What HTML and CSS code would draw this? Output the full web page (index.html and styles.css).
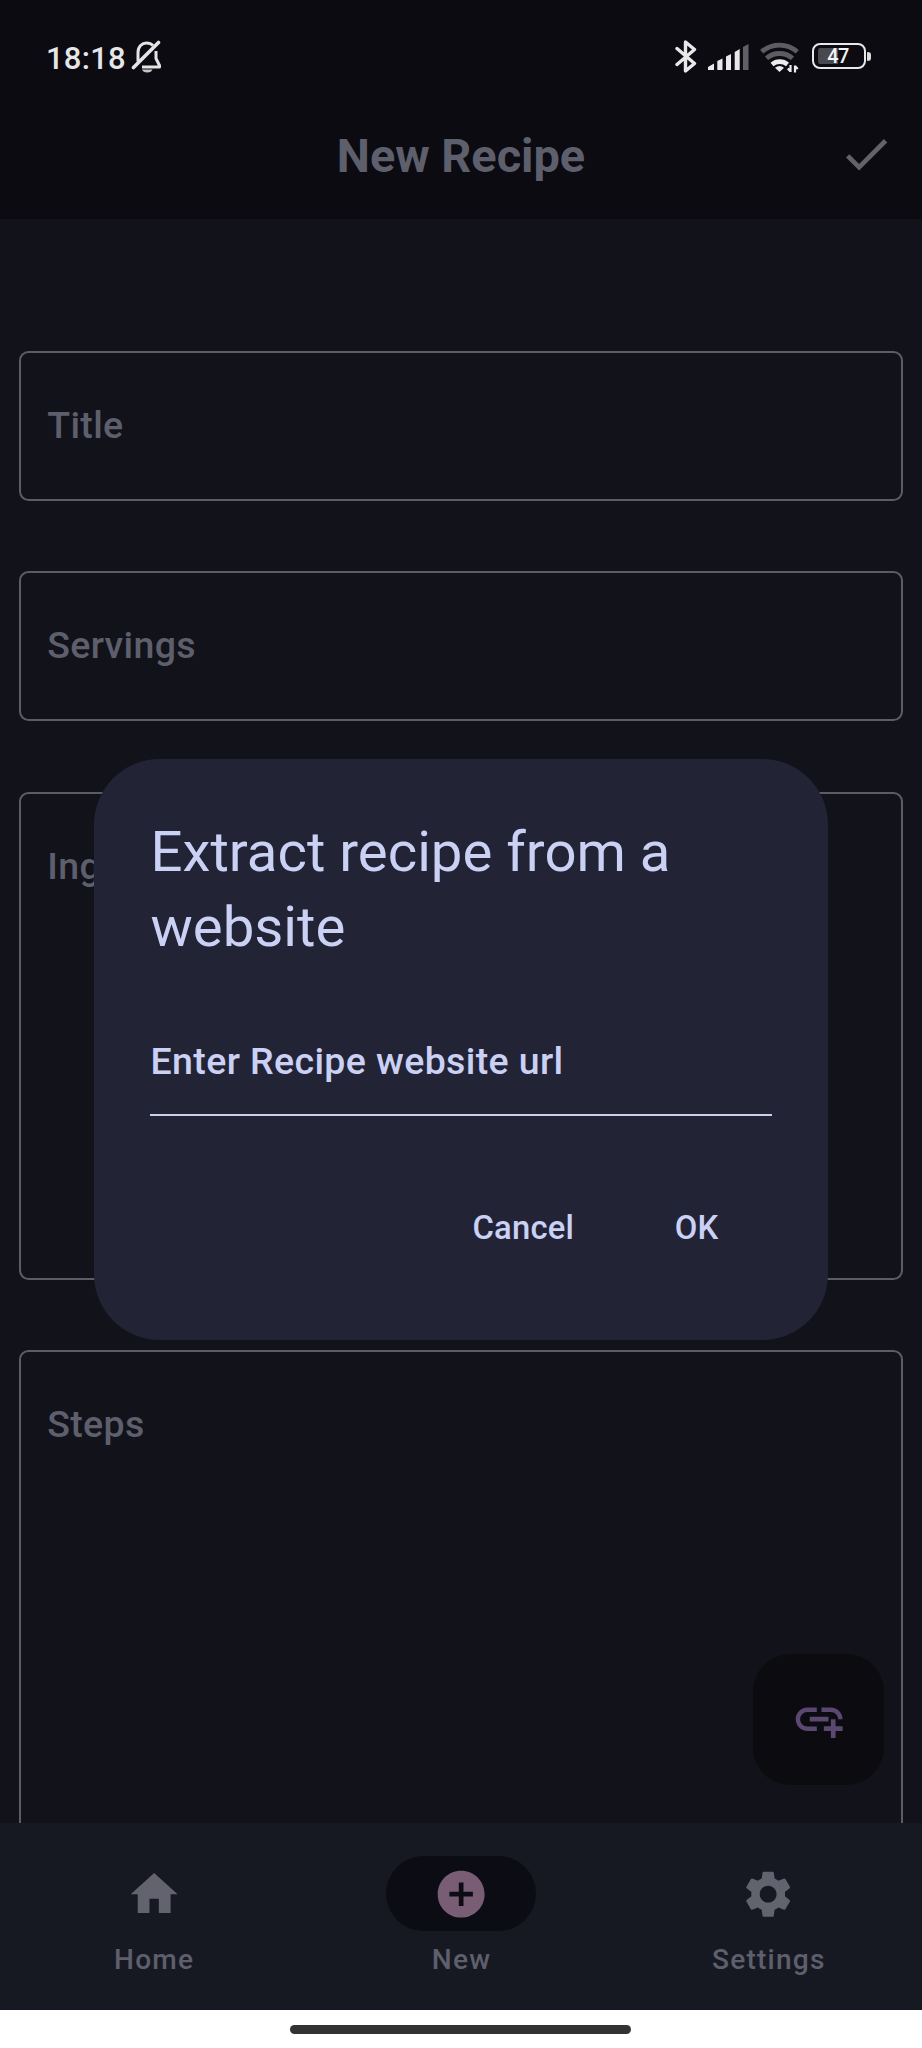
FILE: index.html
```html
<!DOCTYPE html>
<html lang="en">
<head>
<meta charset="utf-8">
<title>New Recipe</title>
<link rel="stylesheet" href="styles.css">
</head>
<body>
<div class="screen">
  <div class="status-bar">
    <span class="clock">18:18</span>
    <svg class="bell" viewBox="0 0 32 34" fill="none" stroke="#e4e4e6" stroke-width="3">
      <path d="M7 21.500V12.500C7 6.500 11 3 15.500 3C18 3 20.500 4 22 5.500M25 11V18.500L28.500 25.500V27H11" stroke-linejoin="round"/>
      <path d="M2.500 27.500L27.500 2.500" stroke-width="3.600" stroke-linecap="round"/>
      <path d="M11 29.500h10.500a5.400 4 0 0 1-10.500 0z" fill="#c4c4c6" stroke="none"/>
    </svg>
    <div class="status-icons">
      <svg class="bluetooth" viewBox="0 0 22 33" fill="none" stroke="#e8e8ea" stroke-width="3.400" stroke-linejoin="round" stroke-linecap="round">
        <path d="M2 8.500L19.500 23.500L10.500 31V2L19.500 9.500L2 24.500"/>
      </svg>
      <svg class="signal" viewBox="0 0 42 27" fill="#e8e8ea">
        <path d="M0 26V23L6 19.500V26zM9.300 26V17L14.500 14.500V26zM18 26V12.500L23 10V26zM26.700 26V8L31.700 5V26z"/>
        <path d="M35 26V3L40.500 0V26z" fill="#606066"/>
      </svg>
      <svg class="wifi" viewBox="0 0 40 31" fill="none">
        <path d="M1.700 9.800a27 27 0 0 1 35.600 0" stroke="#5c5c62" stroke-width="4.800"/>
        <path d="M6.500 16.300a20 20 0 0 1 26 0" stroke="#5c5c62" stroke-width="4.800"/>
        <path d="M12 22.500a12 12 0 0 1 15.500 0" stroke="#ececee" stroke-width="4.600"/>
        <path d="M15 25.700q4.500-3.300 9 0L19.500 30z" fill="#ececee"/>
        <path d="M30.500 23v7M27.800 26.500l2.700 3M35 30.500v-7M37.700 27l-2.700-3" stroke="#ececee" stroke-width="2.200"/>
      </svg>
      <div class="battery"><div class="cell"><span class="level">47</span></div><i class="nub"></i></div>
    </div>
  </div>

  <header class="app-bar">
    <h1 class="app-title">New Recipe</h1>
    <svg class="icon check" viewBox="0 0 24 24"><path d="M9 16.170L4.830 12l-1.420 1.410L9 19 21 7l-1.410-1.410z"/></svg>
  </header>

  <main class="form">
    <div class="field">Title</div>
    <div class="field">Servings</div>
    <div class="field tall">Ing</div>
    <div class="field steps">Steps</div>
    <button class="fab">
      <svg class="icon" viewBox="0 0 24 24"><path d="M8 11h8v2H8zM20.100 12H22c0-2.760-2.240-5-5-5h-4v1.900h4c1.710 0 3.100 1.390 3.100 3.100zM3.900 12c0-1.710 1.390-3.100 3.100-3.100h4V7H7c-2.760 0-5 2.240-5 5s2.240 5 5 5h4v-1.900H7c-1.710 0-3.100-1.390-3.100-3.100zM19 12h-2v3h-3v2h3v3h2v-3h3v-2h-3z"/></svg>
    </button>
  </main>

  <nav class="nav">
    <div class="nav-item">
      <span class="pill"><svg class="icon" viewBox="0 0 24 24"><path d="M10 20v-6h4v6h5v-8h3L12 3 2 12h3v8z"/></svg></span>
      <span class="nav-label">Home</span>
    </div>
    <div class="nav-item active">
      <span class="pill"><svg class="icon" viewBox="0 0 24 24"><path d="M12 2C6.480 2 2 6.480 2 12s4.480 10 10 10 10-4.480 10-10S17.520 2 12 2zm5 11h-4v4h-2v-4H7v-2h4V7h2v4h4v2z"/></svg></span>
      <span class="nav-label">New</span>
    </div>
    <div class="nav-item">
      <span class="pill"><svg class="icon" viewBox="0 0 24 24"><path d="M19.140 12.940c.04-.3.060-.61.060-.94 0-.32-.02-.64-.07-.94l2.030-1.580c.18-.14.230-.41.120-.61l-1.920-3.320c-.12-.22-.37-.29-.59-.22l-2.390.96c-.5-.38-1.030-.7-1.620-.94L14.400 2.810c-.04-.24-.24-.41-.48-.41h-3.840c-.24 0-.43.170-.47.410L9.250 5.350C8.660 5.590 8.120 5.920 7.630 6.290L5.240 5.330c-.22-.08-.47 0-.59.220L2.740 8.870c-.12.210-.08.470.12.610l2.030 1.580c-.05.300-.09.630-.09.940s.02.640.07.940l-2.030 1.580c-.18.140-.23.410-.12.610l1.920 3.320c.12.220.37.290.59.220l2.390-.96c.5.380 1.030.7 1.620.94l.36 2.540c.05.240.24.410.48.410h3.840c.24 0 .44-.17.470-.41l.36-2.540c.59-.24 1.130-.56 1.620-.94l2.390.96c.22.080.47 0 .59-.22l1.920-3.320c.12-.22.070-.47-.12-.61L19.140 12.940zM12 15.600c-1.980 0-3.600-1.620-3.600-3.600s1.620-3.600 3.600-3.600 3.600 1.620 3.600 3.600-1.620 3.600-3.600 3.600z"/></svg></span>
      <span class="nav-label">Settings</span>
    </div>
  </nav>

  <div class="gesture-bar"><div class="handle"></div></div>

  <section class="dialog">
    <h2 class="dialog-title">Extract recipe from a website</h2>
    <div class="url-input">Enter Recipe website url</div>
    <div class="actions"><span class="action">Cancel</span><span class="action">OK</span></div>
  </section>
</div>
</body>
</html>
```
FILE: styles.css
```css
* { box-sizing: border-box; }
body { margin: 0; background: #12121b; font-family: Roboto, "Liberation Sans", sans-serif; }
.screen { position: relative; width: 922px; height: 2048px; display: flex; flex-direction: column; overflow: hidden; color: #5e5f6c; }

.status-bar { height: 106px; flex: none; background: #0b0b11; display: flex; align-items: flex-start; padding: 40px 51px 0 46px; }
.clock { color: #e6e6e8; font-size: 31px; line-height: 37px; font-weight: 500; letter-spacing: 0.250px; width: 79px; margin: 0 7px 0 0; white-space: nowrap; }
.bell { width: 32px; height: 34px; margin-left: -1px; }
.status-icons { margin-left: auto; display: flex; align-items: flex-start; }
.bluetooth { width: 22px; height: 33px; margin-right: 11px; }
.signal { width: 42px; height: 27px; margin: 4px 10px 0 0; }
.wifi { width: 40px; height: 31px; margin: 2px 12px 0 0; }
.battery { display: flex; align-items: center; gap: 1px; margin-top: 3px; }
.cell { width: 54px; height: 26px; border: 2.500px solid #e8e8ea; border-radius: 8px; padding: 3px 4px; background: linear-gradient(90deg, #48484e 20px, transparent 20px) no-repeat content-box; }
.level { display: block; color: #f2f2f4; font-size: 20px; line-height: 17px; font-weight: 500; letter-spacing: -0.500px; text-align: center; padding-right: 2px; }
.nub { width: 4px; height: 9px; background: #dcdcde; border-radius: 1px 3px 3px 1px; }

.app-bar { height: 113px; flex: none; background: #0b0b11; display: grid; grid-template-columns: 84px 1fr 84px; padding-top: 20px; }
.app-title { grid-column: 2; margin: 0; text-align: center; font-size: 46.900px; line-height: 60px; font-weight: 700; }
.icon { width: 56.300px; height: 56.300px; fill: currentColor; display: block; flex: none; }
.check { color: #626268; margin-left: -0.500px; }

.form { position: relative; flex: 1; min-height: 0; overflow: hidden; padding: 132px 19px 0; display: flex; flex-direction: column; gap: 70.400px; background: #12121b; }
.field { flex: none; height: 150px; border: 2px solid #5c5c68; border-radius: 9.500px; padding: 45px 26.200px; font-size: 37.500px; line-height: 54px; font-weight: 500; letter-spacing: 0.350px; }
.tall { height: 488px; }
.steps { height: 700px; }
.fab { position: absolute; right: 38px; bottom: 38px; width: 131px; height: 131px; border: 0; border-radius: 37.500px; background: #0b0b10; color: #5b4870; display: grid; place-items: center; padding: 0 0 0 1px; }

.nav { height: 187px; flex: none; background: #171922; display: grid; grid-template-columns: repeat(3, 1fr); padding-top: 33px; }
.nav-item { display: flex; flex-direction: column; align-items: center; gap: 11px; }
.pill { width: 150px; height: 75px; border-radius: 38px; display: grid; place-items: center; color: #62636f; padding-top: 1px; }
.active .pill { background: #0c0c15; color: #785d74; }
.nav-label { font-size: 28.100px; line-height: 35px; font-weight: 500; letter-spacing: 1.200px; padding-left: 1px; }

.gesture-bar { height: 38px; flex: none; background: #fff; padding: 15px 1px 0 0; }
.handle { width: 341px; height: 9px; margin: 0 auto; border-radius: 5px; background: #333; }

.dialog { position: absolute; left: 94px; top: 758.500px; width: 734px; height: 581.500px; border-radius: 65.700px; background: #222436; color: #cad1f4; padding: 56px 56px 0; }
.dialog-title { margin: 0 0 0 0.500px; font-size: 56.300px; line-height: 75px; font-weight: 400; }
.url-input { height: 113px; margin-top: 38px; border-bottom: 2.300px solid #cbcfee; padding: 31px 0 0 0.500px; font-size: 37.500px; line-height: 54px; font-weight: 500; letter-spacing: 0.380px; }
.actions { display: flex; justify-content: flex-end; gap: 100.500px; margin-top: 92px; padding-right: 53.500px; font-size: 32.800px; line-height: 40px; font-weight: 500; letter-spacing: 0.230px; }
```
